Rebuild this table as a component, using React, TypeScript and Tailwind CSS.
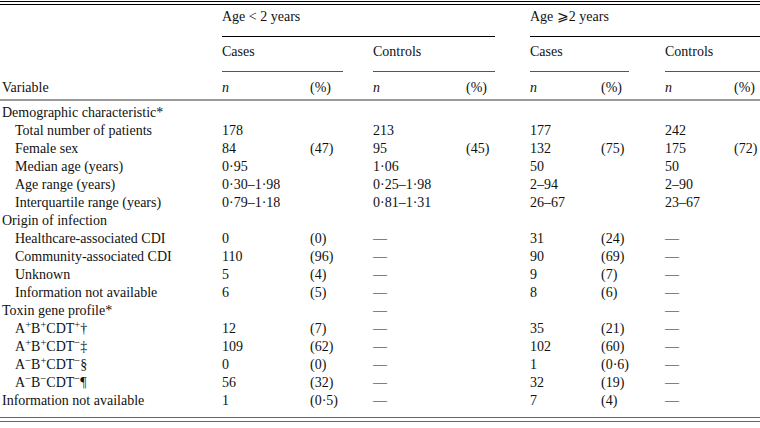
import type { ReactNode } from 'react';

const grid =
  'grid grid-cols-[222px_88px_63px_93px_64px_71px_64px_69px_26px] items-center';

type Row = {
  label: ReactNode;
  indent?: boolean;
  cells?: string[];
};

const D = '—';

const rows: Row[] = [
  { label: 'Demographic characteristic*' },
  { label: 'Total number of patients', indent: true, cells: ['178', '', '213', '', '177', '', '242', ''] },
  { label: 'Female sex', indent: true, cells: ['84', '(47)', '95', '(45)', '132', '(75)', '175', '(72)'] },
  { label: 'Median age (years)', indent: true, cells: ['0·95', '', '1·06', '', '50', '', '50', ''] },
  { label: 'Age range (years)', indent: true, cells: ['0·30–1·98', '', '0·25–1·98', '', '2–94', '', '2–90', ''] },
  { label: 'Interquartile range (years)', indent: true, cells: ['0·79–1·18', '', '0·81–1·31', '', '26–67', '', '23–67', ''] },
  { label: 'Origin of infection' },
  { label: 'Healthcare-associated CDI', indent: true, cells: ['0', '(0)', D, '', '31', '(24)', D, ''] },
  { label: 'Community-associated CDI', indent: true, cells: ['110', '(96)', D, '', '90', '(69)', D, ''] },
  { label: 'Unknown', indent: true, cells: ['5', '(4)', D, '', '9', '(7)', D, ''] },
  { label: 'Information not available', indent: true, cells: ['6', '(5)', D, '', '8', '(6)', D, ''] },
  { label: 'Toxin gene profile*', cells: ['', '', D, '', '', '', D, ''] },
  {
    label: (
      <>
        A<sup>+</sup>B<sup>+</sup>CDT<sup>+</sup>†
      </>
    ),
    indent: true,
    cells: ['12', '(7)', D, '', '35', '(21)', D, ''],
  },
  {
    label: (
      <>
        A<sup>+</sup>B<sup>+</sup>CDT<sup>−</sup>‡
      </>
    ),
    indent: true,
    cells: ['109', '(62)', D, '', '102', '(60)', D, ''],
  },
  {
    label: (
      <>
        A<sup>−</sup>B<sup>+</sup>CDT<sup>−</sup>§
      </>
    ),
    indent: true,
    cells: ['0', '(0)', D, '', '1', '(0·6)', D, ''],
  },
  {
    label: (
      <>
        A<sup>−</sup>B<sup>−</sup>CDT<sup>−</sup>¶
      </>
    ),
    indent: true,
    cells: ['56', '(32)', D, '', '32', '(19)', D, ''],
  },
  { label: 'Information not available', cells: ['1', '(0·5)', D, '', '7', '(4)', D, ''] },
];

export default function App() {
  return (
    <div className="h-[428px] w-[760px] overflow-hidden bg-white font-['Liberation_Serif',serif] text-[14px] leading-none text-[#111]">
      <div className="mt-[1px] h-px bg-black" />
      <div className="mt-[2px] h-px bg-black" />

      {/* group headers */}
      <div className={`${grid} h-[31px] !items-start pt-[5px]`}>
        <div />
        <div className="col-span-4">Age &lt; 2 years</div>
        <div className="col-span-4">Age ⩾2 years</div>
      </div>
      <div className={grid}>
        <div />
        <div className="col-span-4 mr-[35px] h-px bg-black" />
        <div className="col-span-4 h-px bg-black" />
      </div>

      <div className={`${grid} h-[34px] !items-start pt-[8px]`}>
        <div />
        <div className="col-span-2">Cases</div>
        <div className="col-span-2">Controls</div>
        <div className="col-span-2">Cases</div>
        <div className="col-span-2">Controls</div>
      </div>
      <div className={grid}>
        <div />
        <div className="col-span-2 mr-[30px] h-px bg-[#555]" />
        <div className="col-span-2 mr-[35px] h-px bg-[#555]" />
        <div className="col-span-2 mr-[36px] h-px bg-[#555]" />
        <div className="col-span-2 h-px bg-[#555]" />
      </div>

      <div className={`${grid} h-[27px] !items-start pt-[9px]`}>
        <div className="pl-[2px]">Variable</div>
        <div className="italic">n</div>
        <div>(%)</div>
        <div className="italic">n</div>
        <div>(%)</div>
        <div className="italic">n</div>
        <div>(%)</div>
        <div className="italic">n</div>
        <div>(%)</div>
      </div>
      <div className="h-[2px] bg-[#9a9a9a]" />

      <div className="pt-[3px]">
        {rows.map((r, i) => (
          <div key={i} className={`${grid} h-[18px]`}>
            <div className={r.indent ? 'pl-[15px]' : 'pl-[2px]'}>{r.label}</div>
            {(r.cells ?? ['', '', '', '', '', '', '', '']).map((c, j) => (
              <div key={j}>{c}</div>
            ))}
          </div>
        ))}
      </div>

      <div className="mt-[7px] h-px bg-[#666]" />
      <div className="mt-[3px] h-px bg-[#666]" />
    </div>
  );
}
